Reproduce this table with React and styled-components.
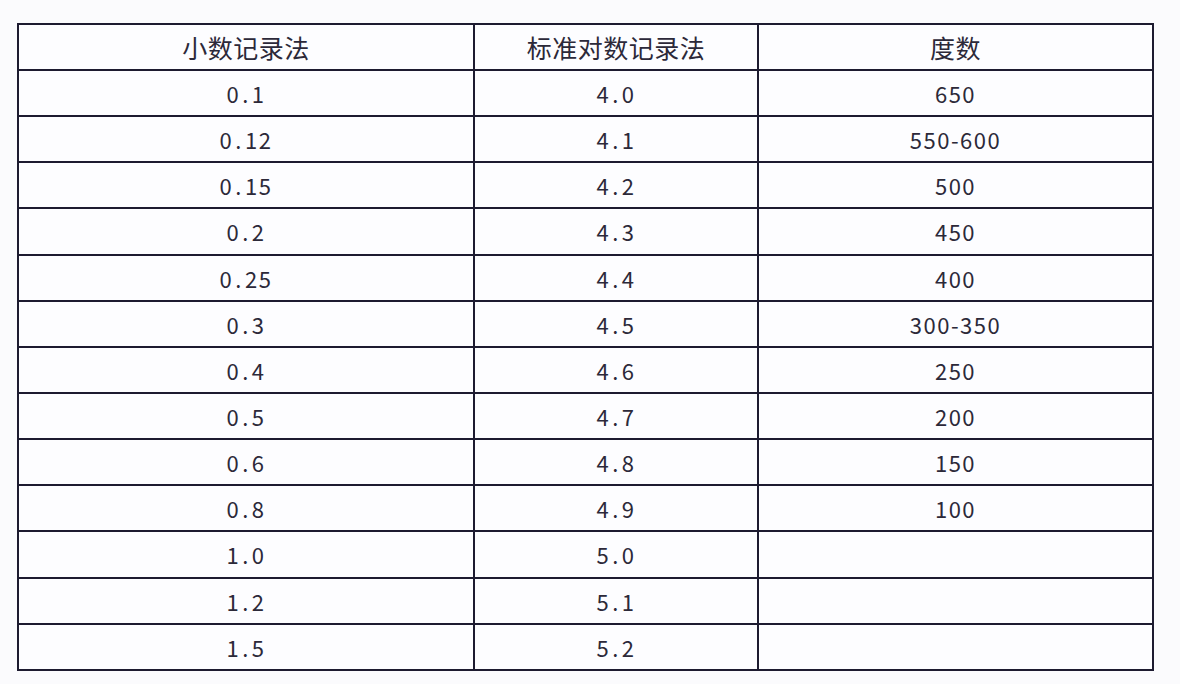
import React from "react";
import styled, { createGlobalStyle } from "styled-components";

const GlobalStyle = createGlobalStyle`
  html, body {
    margin: 0;
    padding: 0;
    background: #fbfbfd;
  }
`;

const Page = styled.div`
  width: 1180px;
  height: 684px;
  box-sizing: border-box;
  padding: 23px 28px 0 17px;
  font-family: "Noto Sans CJK SC", "Noto Sans", sans-serif;
  color: #2c2939;
`;

const Table = styled.table`
  width: 1135px;
  height: 648px;
  border-collapse: collapse;
  table-layout: fixed;
  background: #fdfdff;
  border: 2px solid #1d1b30;
`;

const Cell = styled.td`
  border: 2px solid #1d1b30;
  height: 44px;
  padding: 0;
  text-align: center;
  vertical-align: middle;
  font-weight: 400;
  font-size: ${(p) => (p.$head ? "25px" : "22px")};
  line-height: 1;
  letter-spacing: ${(p) => (p.$head ? "0.5px" : "1.5px")};
`;

const Dot = styled.span`
  margin: 0 2px;
`;

const columns = [
  { title: "小数记录法", width: 456 },
  { title: "标准对数记录法", width: 284 },
  { title: "度数", width: 395 },
];

const rows = [
  ["0.1", "4.0", "650"],
  ["0.12", "4.1", "550-600"],
  ["0.15", "4.2", "500"],
  ["0.2", "4.3", "450"],
  ["0.25", "4.4", "400"],
  ["0.3", "4.5", "300-350"],
  ["0.4", "4.6", "250"],
  ["0.5", "4.7", "200"],
  ["0.6", "4.8", "150"],
  ["0.8", "4.9", "100"],
  ["1.0", "5.0", ""],
  ["1.2", "5.1", ""],
  ["1.5", "5.2", ""],
];

// decimals in the source have a wide gap around the point
const Num = ({ value }) => {
  if (!value.includes(".")) return value;
  const [a, b] = value.split(".");
  return (
    <>
      {a}
      <Dot>.</Dot>
      {b}
    </>
  );
};

export default function App() {
  return (
    <Page>
      <GlobalStyle />
      <Table>
        <colgroup>
          {columns.map((c) => (
            <col key={c.title} style={{ width: c.width }} />
          ))}
        </colgroup>
        <thead>
          <tr>
            {columns.map((c) => (
              <Cell as="th" key={c.title} $head>
                {c.title}
              </Cell>
            ))}
          </tr>
        </thead>
        <tbody>
          {rows.map((r, i) => (
            <tr key={i}>
              {r.map((v, j) => (
                <Cell key={j}>
                  <Num value={v} />
                </Cell>
              ))}
            </tr>
          ))}
        </tbody>
      </Table>
    </Page>
  );
}
